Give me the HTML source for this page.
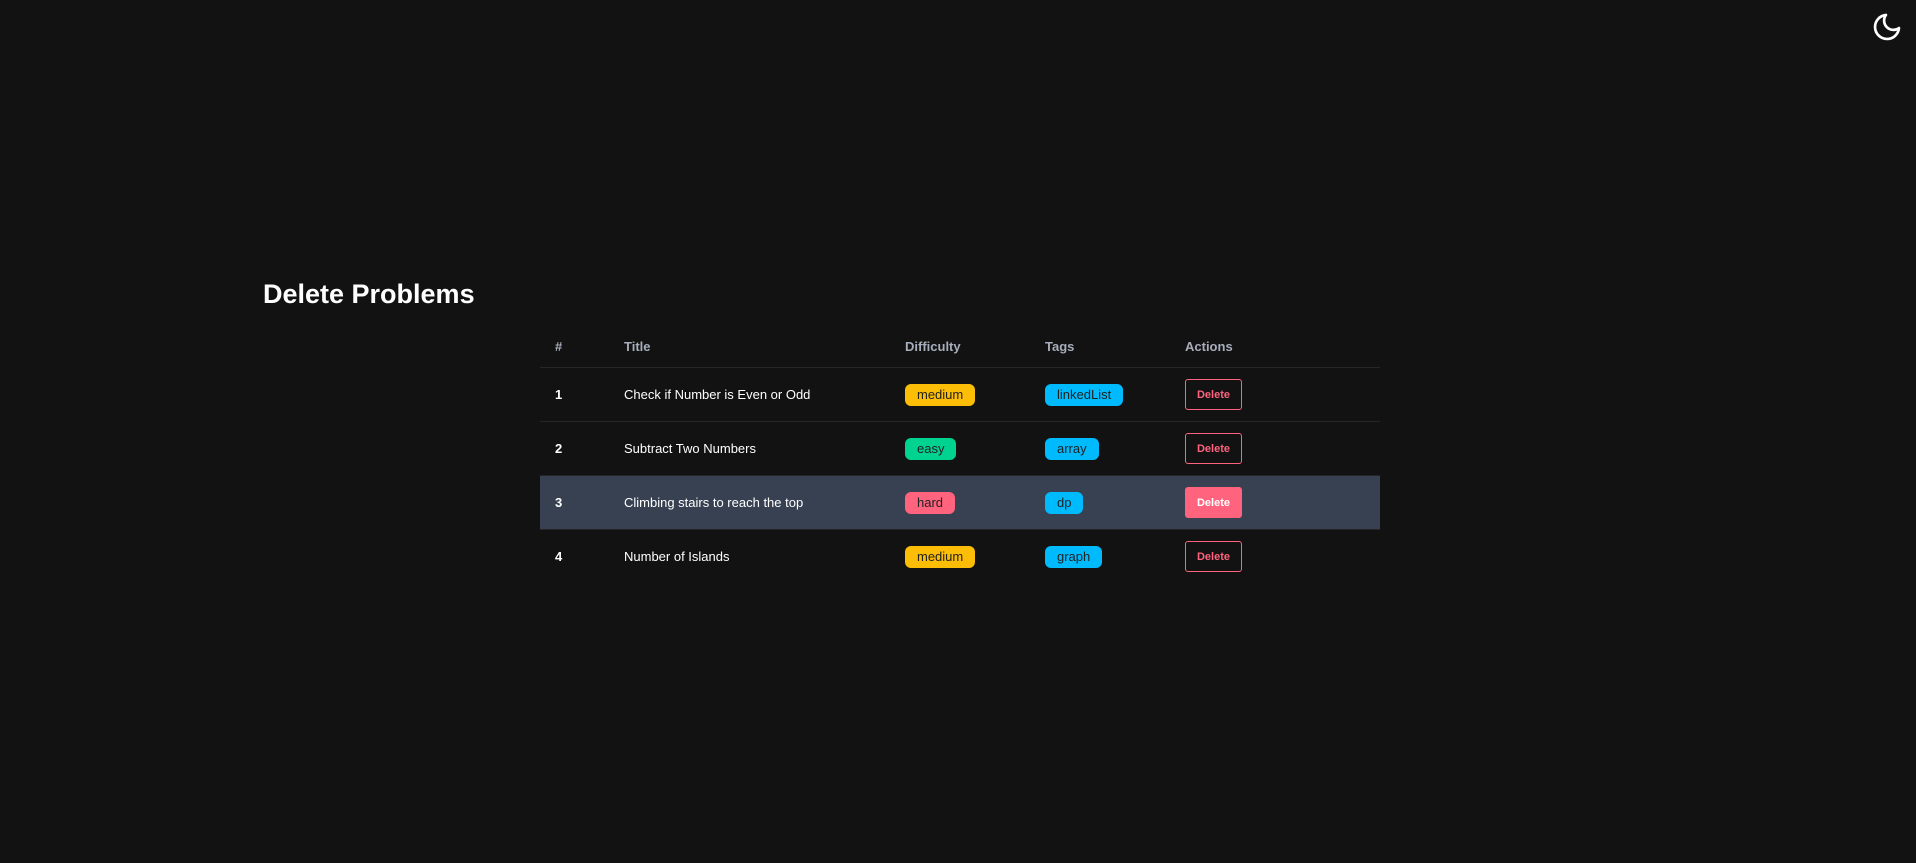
<!DOCTYPE html>
<html><head><meta charset="utf-8"><style>
body{margin:0;background:#121212;width:1916px;height:863px;overflow:hidden;font-family:"Liberation Sans",sans-serif;color:#fff;position:relative}
h1{position:absolute;left:263px;top:279px;margin:0;font-size:27px;font-weight:bold;color:#fff}
table{position:absolute;left:540px;top:325px;width:840px;border-collapse:collapse;font-size:13px}
th{color:#a6adbb;font-weight:bold;text-align:left;height:42px;border-bottom:1px solid #262626;padding:0}
td{height:53px;border-bottom:1px solid #262626;padding:0}
tr:last-child td{border-bottom:none}
tr.hl td{background:#374151}
.c1{padding-left:15px;width:69px}.c2{width:281px}.c3{width:140px}.c4{width:140px}
td.c1{font-weight:bold}
.b{display:inline-block;padding:3px 12px 4px;border-radius:6px;color:#222;font-size:13px}
.m{background:#fbbd05}.e{background:#00d390}.h{background:#ff637d}.t{background:#00bafe}
.d{display:inline-block;width:55px;height:29px;line-height:30px;text-align:center;border:1px solid #ff637d;border-radius:3px;color:#ff637d;font-size:11px;font-weight:bold;vertical-align:middle}
.d.f{background:#ff637d;color:#fff}
</style></head><body>
<svg style="position:absolute;left:1871px;top:11px" width="32" height="32" viewBox="0 0 24 24" fill="none" stroke="#fff" stroke-width="2" stroke-linecap="round" stroke-linejoin="round"><path d="M21 12.79A9 9 0 1 1 11.21 3 7 7 0 0 0 21 12.79z"/></svg>
<h1>Delete Problems</h1>
<table>
<tr><th class="c1">#</th><th class="c2">Title</th><th class="c3">Difficulty</th><th class="c4">Tags</th><th>Actions</th></tr>
<tr><td class="c1">1</td><td>Check if Number is Even or Odd</td><td><span class="b m">medium</span></td><td><span class="b t">linkedList</span></td><td><span class="d">Delete</span></td></tr>
<tr><td class="c1">2</td><td>Subtract Two Numbers</td><td><span class="b e">easy</span></td><td><span class="b t">array</span></td><td><span class="d">Delete</span></td></tr>
<tr class="hl"><td class="c1">3</td><td>Climbing stairs to reach the top</td><td><span class="b h">hard</span></td><td><span class="b t">dp</span></td><td><span class="d f">Delete</span></td></tr>
<tr><td class="c1">4</td><td>Number of Islands</td><td><span class="b m">medium</span></td><td><span class="b t">graph</span></td><td><span class="d">Delete</span></td></tr>
</table>
</body></html>
